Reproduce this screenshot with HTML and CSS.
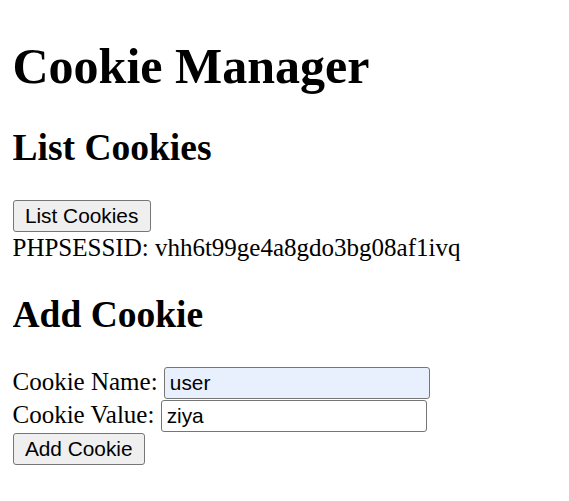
FILE: index.html
```html
<!DOCTYPE html>
<html>
<head>
<meta charset="utf-8">
<title>Cookie Manager</title>
<link rel="stylesheet" href="styles.css">
</head>
<body>
<h1 class="title">Cookie Manager</h1>
<h2 class="section">List Cookies</h2>
<button class="btn" type="button">List Cookies</button>
<div class="cookie-list">PHPSESSID: vhh6t99ge4a8gdo3bg08af1ivq</div>
<h2 class="section">Add Cookie</h2>
<form class="cookie-form">
<label class="field-label">Cookie Name: <input class="field field-filled" type="text" value="user"></label><br>
<label class="field-label">Cookie Value: <input class="field" type="text" value="ziya"></label><br>
<button class="btn" type="button">Add Cookie</button>
</form>
</body>
</html>
```
FILE: styles.css
```css
html { background: #fff; }
body {
  margin: 12.5px;
  font-family: "Liberation Serif", "Times New Roman", serif;
  font-size: 25px;
  color: #000;
}
.title {
  font-size: 50px;
  font-weight: bold;
  margin: 24px 0 30.5px;
}
.section {
  font-size: 37.5px;
  font-weight: bold;
  margin: 31.1px 0;
}
.btn {
  font-family: "Liberation Sans", Arial, sans-serif;
  font-size: 20.83px;
  padding: 3px 11.4px;
  margin: 0;
  background: #efefef;
  color: #000;
  border: 1px solid #767676;
  border-radius: 3px;
}
.cookie-list { margin-top: 2px; }
.cookie-form { margin: 0; }
.field {
  box-sizing: border-box;
  font-family: "Liberation Sans", Arial, sans-serif;
  font-size: 20.83px;
  padding: 3px 5px;
  margin: 0.5px 0;
  width: 266px;
  border: 1px solid #767676;
  border-radius: 3px;
  background: #fff;
  color: #000;
}
.field-filled { background: #e8f0fe; }
```
